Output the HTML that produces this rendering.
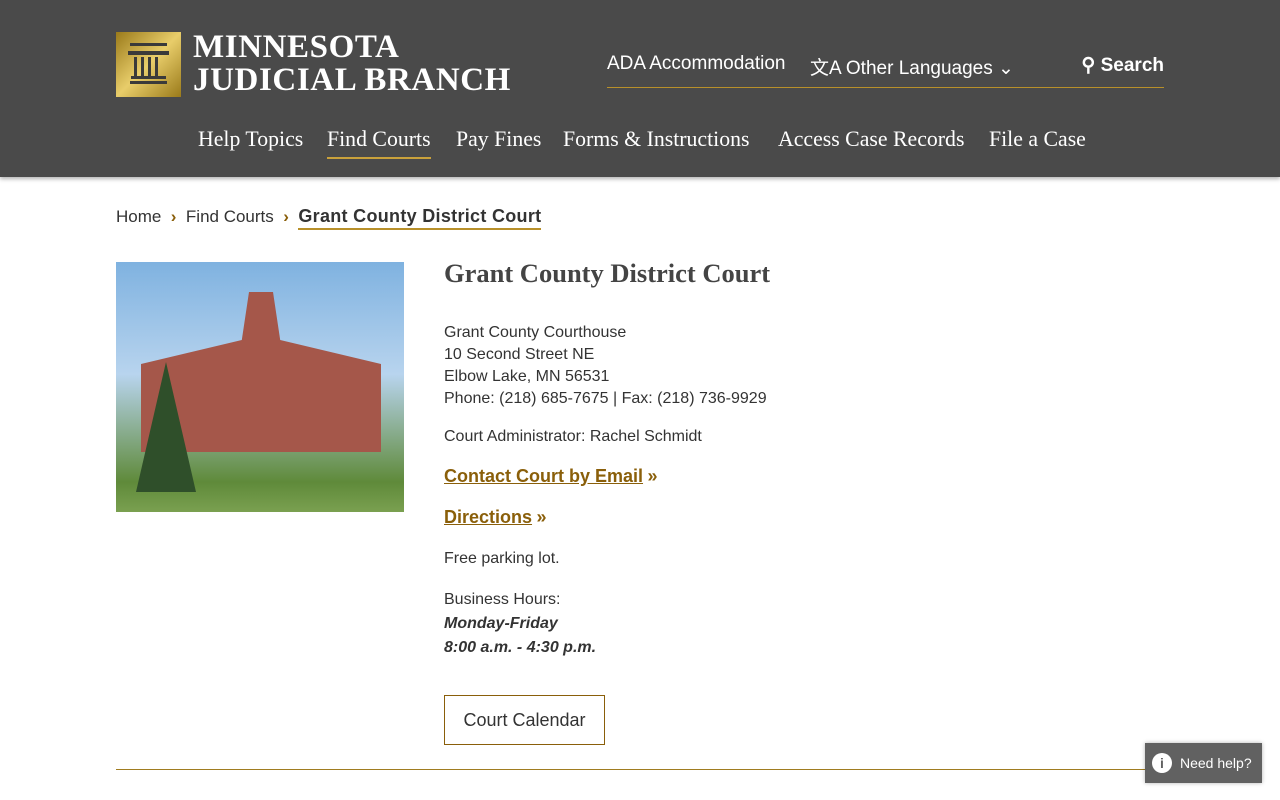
<!DOCTYPE html>
<html><head><style>
*{margin:0;padding:0;box-sizing:border-box}
body{width:1280px;height:800px;overflow:hidden;background:#fff;font-family:"Liberation Sans",sans-serif;color:#333;position:relative}
.hdr{position:absolute;left:0;top:0;width:1280px;height:177px;background:#4a4a4a;box-shadow:0 2px 4px rgba(0,0,0,.3)}
.logo{position:absolute;left:116px;top:32px;width:65px;height:65px;background:linear-gradient(135deg,#9a7a1a,#e8cd6a 50%,#9a7a1a)}
.lt{position:absolute;left:193px;top:31px;color:#fff;font-family:"Liberation Serif",serif;font-weight:bold;font-size:33px;line-height:33px;letter-spacing:0.6px}
.util{position:absolute;left:607px;top:52px;width:557px;height:36px;border-bottom:1px solid #b8902a;color:#fff;font-size:19px}
.nav{position:absolute;top:127px;color:#fff;font-family:"Liberation Serif",serif;font-size:21.8px}
.a{color:#8a5f0a;font-weight:bold;text-decoration:underline;font-size:18px}
.c{position:absolute;left:444px;font-size:16px;line-height:22px}
</style></head><body>
<div class="hdr">
<div class="logo"><svg width="65" height="65" viewBox="0 0 65 65"><g fill="#3a3a3a"><rect x="14" y="11" width="37" height="3"/><rect x="12" y="19" width="41" height="4"/><rect x="14" y="49" width="37" height="3"/><rect x="18" y="25" width="3" height="20"/><rect x="25" y="25" width="3" height="20"/><rect x="32" y="25" width="3" height="20"/><rect x="39" y="25" width="3" height="20"/><rect x="15" y="44" width="35" height="3"/></g></svg></div>
<div class="lt">MINNESOTA<br>JUDICIAL BRANCH</div>
<div class="util"><span style="position:absolute;left:0;top:1px">ADA Accommodation</span><span style="position:absolute;left:203px;top:1px">文A Other Languages ⌄</span><span style="position:absolute;right:0;top:2px;font-weight:bold">⚲ Search</span></div>
<span class="nav" style="left:198px">Help Topics</span>
<span class="nav" style="left:327px;border-bottom:2px solid #c9a13b;padding-bottom:5px">Find Courts</span>
<span class="nav" style="left:456px">Pay Fines</span>
<span class="nav" style="left:563px">Forms &amp; Instructions</span>
<span class="nav" style="left:778px">Access Case Records</span>
<span class="nav" style="left:989px">File a Case</span>
</div>
<div style="position:absolute;left:116px;top:206px;font-size:17px">Home <span style="color:#8a5f0a;font-weight:bold">&nbsp;›&nbsp;</span> Find Courts <span style="color:#8a5f0a;font-weight:bold">&nbsp;›&nbsp;</span> <b style="border-bottom:2px solid #b8902a;padding-bottom:2px;font-size:18px;letter-spacing:0.3px">Grant County District Court</b></div>
<div style="position:absolute;left:116px;top:262px;width:288px;height:250px;background:linear-gradient(#7fb2e0 0,#b8d4ee 45%,#5f8a3a 88%,#7aa050 100%)"><div style="position:absolute;left:25px;top:30px;width:240px;height:160px;background:#a5574a;clip-path:polygon(45% 0,55% 0,58% 30%,100% 45%,100% 100%,0 100%,0 45%,42% 30%)"></div><div style="position:absolute;left:20px;top:100px;width:60px;height:130px;background:#2f4f2a;clip-path:polygon(50% 0,100% 100%,0 100%)"></div></div>
<div class="c" style="top:262px;font-family:'Liberation Serif',serif;font-size:26.5px;font-weight:bold;color:#444">Grant County District Court</div>
<div class="c" style="top:322px">Grant County Courthouse<br>10 Second Street NE<br>Elbow Lake, MN 56531<br>Phone: (218) 685-7675 | Fax: (218) 736-9929</div>
<div class="c" style="top:426px">Court Administrator: Rachel Schmidt</div>
<div class="c" style="top:465px"><span class="a">Contact Court by Email</span> <b style="color:#8a5f0a;font-size:18px">»</b></div>
<div class="c" style="top:506px"><span class="a">Directions</span> <b style="color:#8a5f0a;font-size:18px">»</b></div>
<div class="c" style="top:548px">Free parking lot.</div>
<div class="c" style="top:588px;line-height:24px">Business Hours:<br><b><i>Monday-Friday<br>8:00 a.m. - 4:30 p.m.</i></b></div>
<div style="position:absolute;left:444px;top:695px;width:161px;height:50px;border:1px solid #8a5f0a;font-size:18px;text-align:center;line-height:48px">Court Calendar</div>
<div style="position:absolute;left:116px;top:769px;width:1048px;height:1px;background:#a07c20"></div>
<div style="position:absolute;left:1145px;top:743px;width:117px;height:40px;background:#616161;box-shadow:0 0 4px rgba(0,0,0,.3);color:#fff;font-size:14px;line-height:40px;padding-left:35px">Need help?<span style="position:absolute;left:7px;top:10px;width:20px;height:20px;border-radius:50%;background:#fff;color:#616161;font-size:14px;line-height:20px;text-align:center;font-weight:bold">i</span></div>
</body></html>
